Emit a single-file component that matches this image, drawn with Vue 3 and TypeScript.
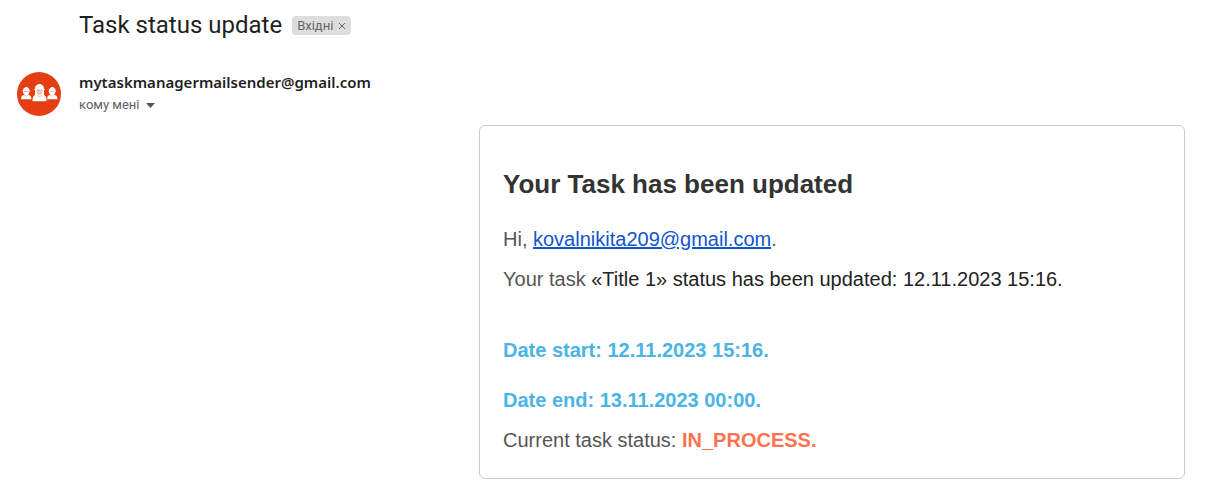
<script setup lang="ts">
import { ref } from 'vue'

const sender = 'mytaskmanagermailsender@gmail.com'
const recipient = 'kovalnikita209@gmail.com'
const task = {
  title: 'Title 1',
  updated: '12.11.2023 15:16',
  start: '12.11.2023 15:16',
  end: '13.11.2023 00:00',
  status: 'IN_PROCESS',
}
const people = [
  'translate(4 15)',
  'translate(30 15)',
]
const inInbox = ref(true)
</script>

<template>
  <main class="mail">
    <header class="subject">
      <h1>Task status update</h1>
      <span v-if="inInbox" class="label">
        Вхідні
        <button type="button" aria-label="Видалити мітку" @click="inInbox = false">
          <svg viewBox="0 0 8 8" aria-hidden="true"><path d="M1 1l6 6M7 1L1 7" /></svg>
        </button>
      </span>
    </header>

    <section class="sender">
      <svg class="avatar" viewBox="0 0 44 44" aria-hidden="true">
        <circle cx="22" cy="22" r="22" fill="#e53e13" />
        <g v-for="place in people" :key="place" :transform="place">
          <path
            d="M2 3.500Q2 1.200 4 .5V0h2.500v.5Q8.500 1.200 8.500 3.500h.5v1h-.5Q8.300 6.700 7 7.700l2 .7q1.500.6 1.500 3.800H0Q0 9 1.500 8.400l2-.7Q2.100 6.700 2 4.500h-.5v-1z"
            fill="#fff"
          />
          <path d="M3 4.500h4.500M3.500 8.300l1.700 1 1.700-1" fill="none" stroke="#ef8d72" stroke-width=".6" />
        </g>
        <path
          d="M18 17Q18 13.500 21 12.600V12h3v.6Q27 13.500 27 17h.8v1H27v5l1 .8q1.500 1 1.500 5.500h-14q0-4.500 1.500-5.500l1-.8v-5h-.8v-1z"
          fill="#fff"
        />
        <path d="M19.500 18.200q3-1 6 0V20q-.6 3-3 3.200-2.400-.2-3-3.200z" fill="#f7c8ba" />
        <path d="M19.500 18.200q3-1 6 0M20 23.400l2.500 1.300 2.500-1.300" fill="none" stroke="#ef8d72" stroke-width=".6" />
      </svg>
      <div class="who">
        <strong>{{ sender }}</strong>
        <button type="button" class="details">
          кому мені
          <svg viewBox="0 0 9 5" aria-hidden="true"><path d="M0 0h9L4.500 5z" /></svg>
        </button>
      </div>
    </section>

    <article class="card">
      <h2>Your Task has been updated</h2>
      <p>Hi, <a :href="`mailto:${recipient}`">{{ recipient }}</a>.</p>
      <p>Your task <span class="dark">«{{ task.title }}» status has been updated: {{ task.updated }}.</span></p>
      <p class="date">Date start: {{ task.start }}.</p>
      <p class="date end">Date end: {{ task.end }}.</p>
      <p>Current task status: <b>{{ task.status }}.</b></p>
    </article>
  </main>
</template>

<style>
body {
  margin: 0;
  background: #fff;
}
</style>

<style scoped>
.mail {
  padding: 8px 29px 18px 17px;
  font-family: Roboto, "Liberation Sans", sans-serif;
  color: #1f1f1f;
}
.subject {
  display: flex;
  align-items: center;
  gap: 10px;
  height: 34px;
  padding-left: 62px;
}
h1 {
  margin: 0;
  font: 400 24px/34px Roboto, sans-serif;
}
.label {
  display: flex;
  align-items: center;
  gap: 5px;
  height: 19px;
  padding: 0 5px;
  border-radius: 4px;
  background: #ddd;
  color: #666;
  font-size: 13px;
}
button {
  display: flex;
  align-items: center;
  padding: 0;
  border: 0;
  background: none;
  color: inherit;
  font: inherit;
  cursor: pointer;
}
.label svg {
  width: 8px;
  height: 8px;
  margin-top: 2px;
  fill: none;
  stroke: #666;
}
.sender {
  display: flex;
  gap: 18px;
  margin-top: 30px;
}
.avatar {
  width: 44px;
  height: 44px;
}
.who strong {
  display: block;
  font: 600 15px/20px "Noto Sans", sans-serif;
}
.details {
  gap: 6px;
  margin-top: 3px;
  color: #5e5e5e;
  font-size: 13px;
  line-height: 20px;
}
.details svg {
  width: 9px;
  height: 5px;
  fill: #555;
}
.card {
  margin: 9px 0 0 462px;
  padding: 38px 23px 13px;
  border: 1px solid #ccc;
  border-radius: 6px;
  font: 400 20px/30px "Liberation Sans", Arial, sans-serif;
  color: #555;
}
h2 {
  margin: 0 0 20px;
  font-size: 26px;
  line-height: 40px;
  color: #333;
}
p {
  margin: 0 0 10px;
}
a {
  color: #15c;
}
.dark {
  color: #222;
}
.date {
  margin: 41px 0 20px;
  color: #4cb4e2;
  font-weight: 700;
}
.end {
  margin: 0 0 10px;
}
b {
  color: #ff7250;
}
</style>
